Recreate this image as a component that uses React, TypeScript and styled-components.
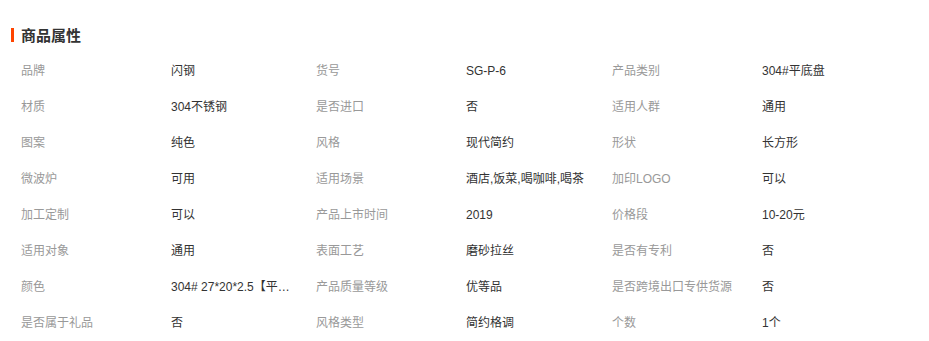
import React from 'react';
import styled, { createGlobalStyle } from 'styled-components';

const GlobalStyle = createGlobalStyle`
  body {
    margin: 0;
    background: #fff;
    font-family: "Liberation Sans", "Noto Sans CJK SC", sans-serif;
  }
`;

const attrs: [string, string][] = [
  ['品牌', '闪钢'],
  ['货号', 'SG-P-6'],
  ['产品类别', '304#平底盘'],
  ['材质', '304不锈钢'],
  ['是否进口', '否'],
  ['适用人群', '通用'],
  ['图案', '纯色'],
  ['风格', '现代简约'],
  ['形状', '长方形'],
  ['微波炉', '可用'],
  ['适用场景', '酒店,饭菜,喝咖啡,喝茶'],
  ['加印LOGO', '可以'],
  ['加工定制', '可以'],
  ['产品上市时间', '2019'],
  ['价格段', '10-20元'],
  ['适用对象', '通用'],
  ['表面工艺', '磨砂拉丝'],
  ['是否有专利', '否'],
  ['颜色', '304# 27*20*2.5【平底盘】'],
  ['产品质量等级', '优等品'],
  ['是否跨境出口专供货源', '否'],
  ['是否属于礼品', '否'],
  ['风格类型', '简约格调'],
  ['个数', '1个']
];

const App = () => (
  <Wrapper>
    <GlobalStyle />
    <Heading>
      <Mark />
      <h3>商品属性</h3>
    </Heading>
    <AttrGrid>
      {attrs.map(([label, value], index) => (
        <React.Fragment key={index}>
          <Label>{label}</Label>
          <Value title={value}>{value}</Value>
        </React.Fragment>
      ))}
    </AttrGrid>
  </Wrapper>
);

export default App;

const Wrapper = styled.div`
  width: 929px;
  padding-top: 25px;
`;

const Heading = styled.div`
  display: flex;
  align-items: center;
  column-gap: 7px;
  padding-left: 11px;
  height: 20px;
  h3 {
    margin: 0;
    font-size: 15px;
    font-weight: bold;
    color: #333;
    font-family: "Noto Sans CJK SC", sans-serif;
    line-height: 20px;
  }
`;

const Mark = styled.span`
  width: 3px;
  height: 14px;
  background: #ff4400;
`;

const AttrGrid = styled.div`
  display: grid;
  grid-template-columns: 150px 145px 150px 146px 150px 1fr;
  grid-auto-rows: 36px;
  padding: 8px 0 0 21px;
  font-size: 12px;
`;

const Label = styled.div`
  align-self: center;
  height: 18px;
  line-height: 18px;
  color: #999;
  white-space: nowrap;
`;

const Value = styled.div`
  align-self: center;
  height: 18px;
  line-height: 18px;
  color: #333;
  padding-right: 20px;
  white-space: nowrap;
  overflow: hidden;
  text-overflow: ellipsis;
`;
